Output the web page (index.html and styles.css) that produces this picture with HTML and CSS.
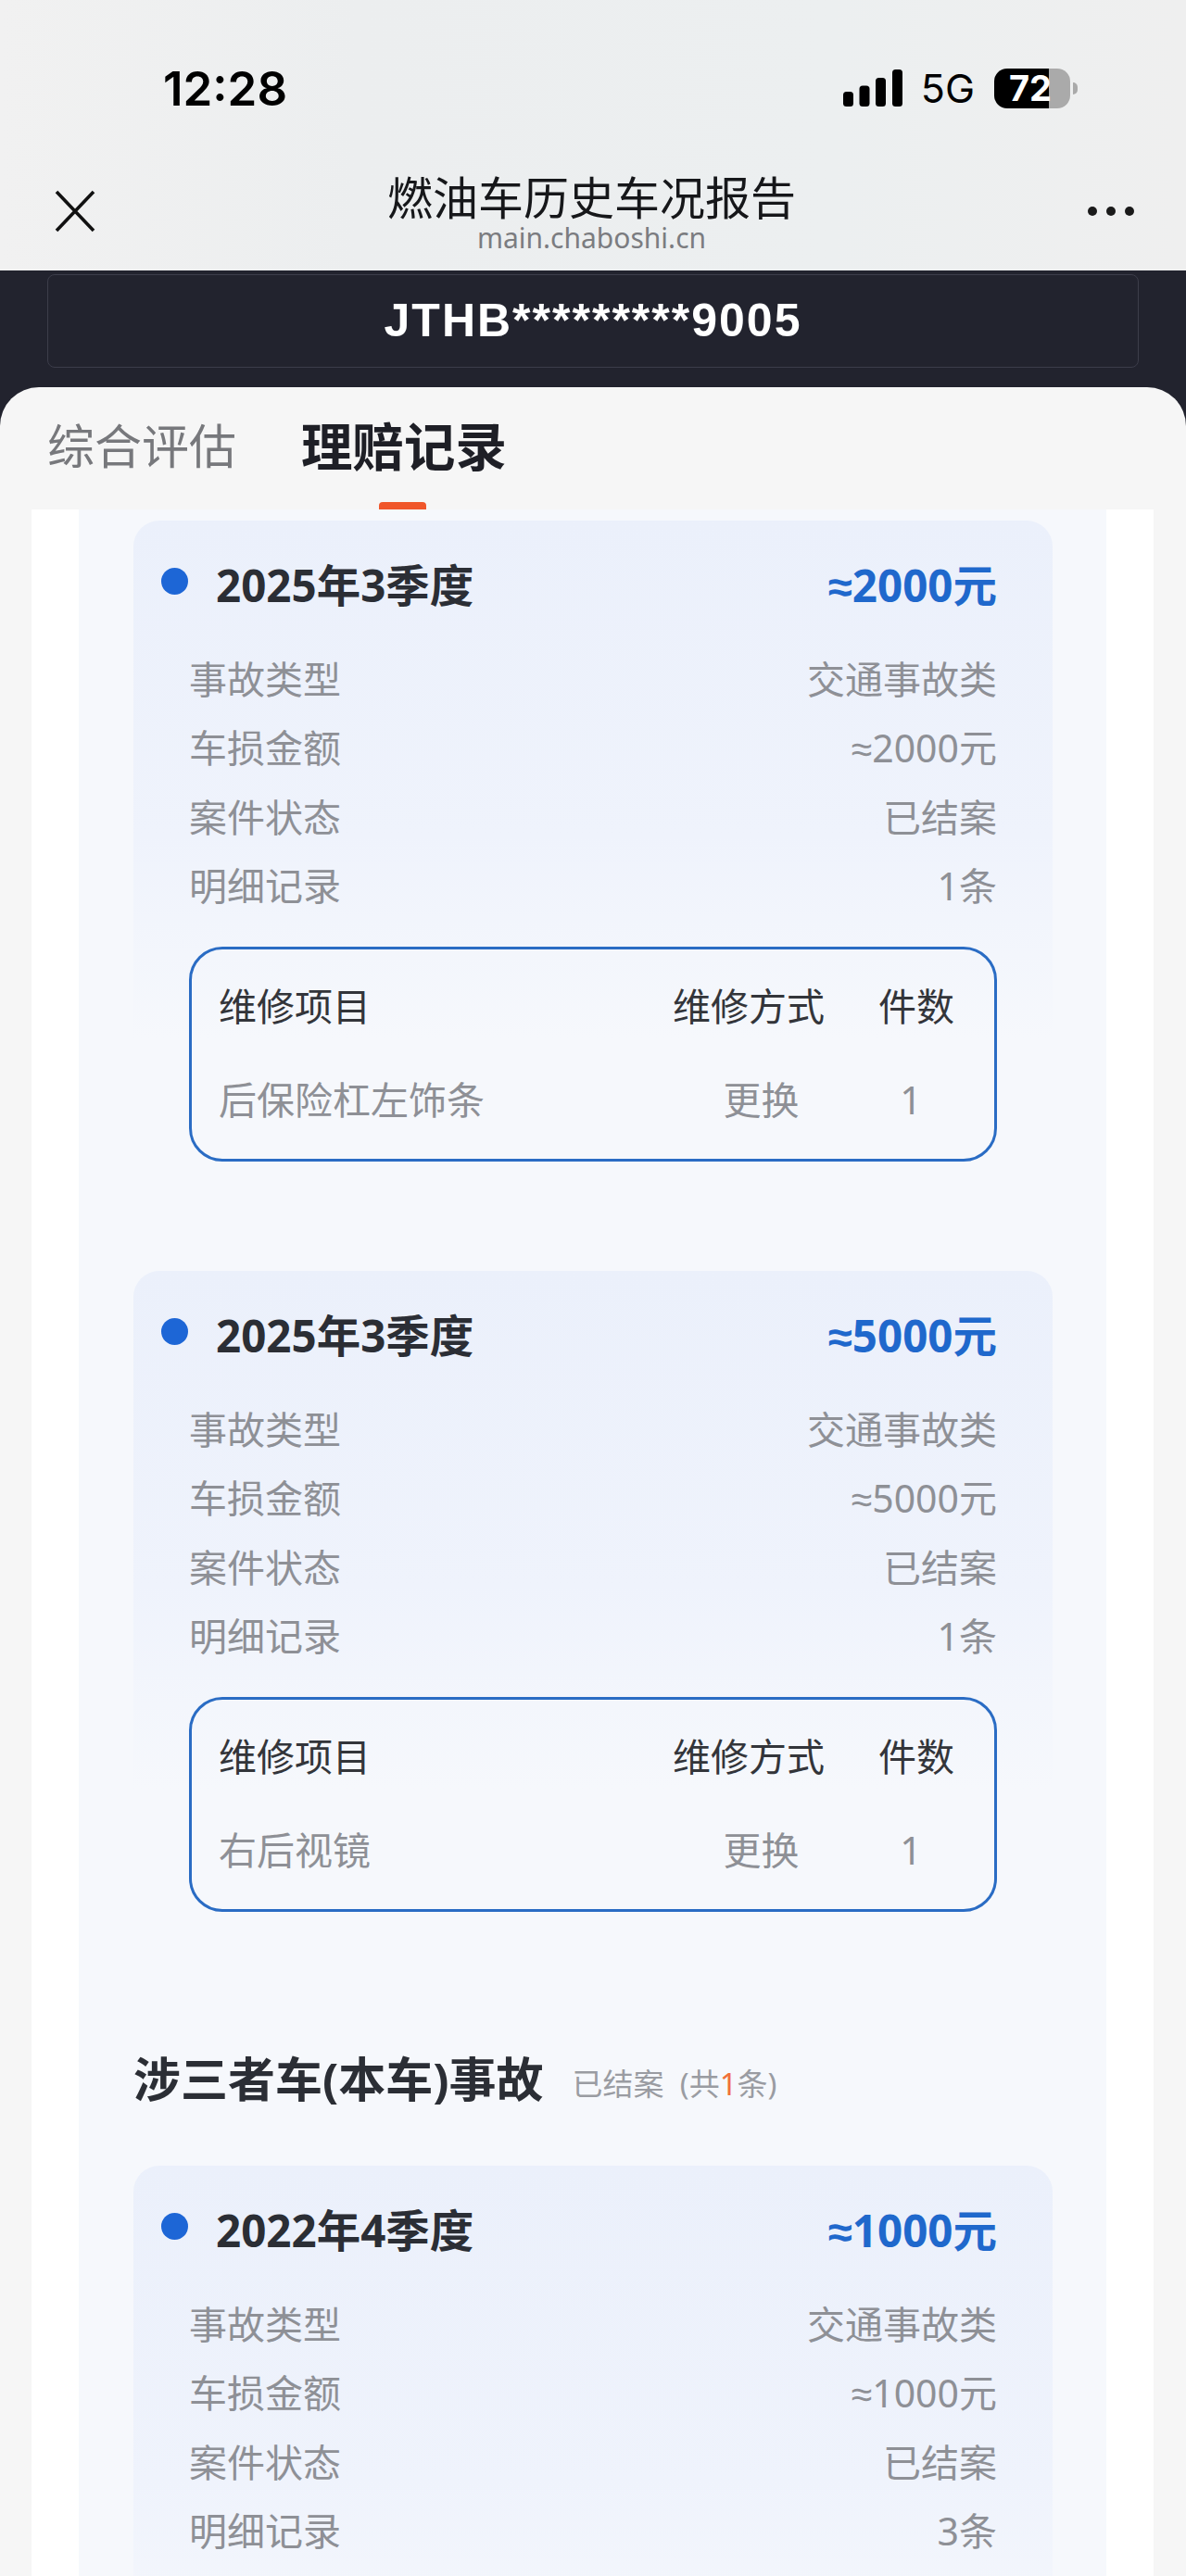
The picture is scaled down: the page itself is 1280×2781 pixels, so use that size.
FILE: index.html
```html
<!DOCTYPE html>
<html>
    <head>
        <title>燃油车历史车况报告</title>
        <link rel="stylesheet" href="styles.css">
    </head>
    <body>
        <div class="top">
            <div class="status">
                <span class="time">12:28</span>
                <div class="status-right">
                    <svg class="signal" width="64" height="40" viewBox="0 0 64 40">
                        <rect x="0" y="24" width="11" height="16" rx="3.5"/>
                        <rect x="17.5" y="17.5" width="11" height="22.5" rx="3.5"/>
                        <rect x="35" y="9" width="11" height="31" rx="3.5"/>
                        <rect x="53" y="0" width="11" height="40" rx="3.5"/>
                    </svg>
                    <span class="net">5G</span>
                    <div class="battery">
                        <div class="battery-body"><span class="battery-num">72</span></div>
                        <b class="battery-nub"></b>
                    </div>
                </div>
            </div>
            <div class="nav">
                <svg class="close" width="44" height="46" viewBox="0 0 44 46">
                    <path d="M2 2 L42 44 M42 2 L2 44" fill="none" stroke="#111" stroke-width="3.6"/>
                </svg>
                <div class="nav-title">
                    <div class="nav-name">燃油车历史车况报告</div>
                    <div class="nav-host">main.chaboshi.cn</div>
                </div>
                <div class="more"><b></b><b></b><b></b></div>
            </div>
        </div>

        <div class="vin-wrap">
            <div class="vin">JTHB*********9005</div>
        </div>

        <div class="sheet">
            <div class="tabs">
                <div class="tab">综合评估</div>
                <div class="tab tab-on">理赔记录<b class="tab-mark"></b></div>
            </div>
            <div class="strip">
                <div class="panel">

                    <div class="card">
                        <div class="card-head">
                            <b class="dot"></b>
                            <span class="card-date">2025年3季度</span>
                            <span class="card-amount"><i class="approx">≈</i>2000元</span>
                        </div>
                        <div class="row"><span>事故类型</span><span>交通事故类</span></div>
                        <div class="row"><span>车损金额</span><span><i class="approx">≈</i>2000元</span></div>
                        <div class="row"><span>案件状态</span><span>已结案</span></div>
                        <div class="row"><span>明细记录</span><span>1条</span></div>
                        <div class="repair">
                            <div class="repair-row repair-head"><span>维修项目</span><span>维修方式</span><span>件数</span></div>
                            <div class="repair-row repair-item"><span>后保险杠左饰条</span><span>更换</span><span>1</span></div>
                        </div>
                    </div>

                    <div class="card">
                        <div class="card-head">
                            <b class="dot"></b>
                            <span class="card-date">2025年3季度</span>
                            <span class="card-amount"><i class="approx">≈</i>5000元</span>
                        </div>
                        <div class="row"><span>事故类型</span><span>交通事故类</span></div>
                        <div class="row"><span>车损金额</span><span><i class="approx">≈</i>5000元</span></div>
                        <div class="row"><span>案件状态</span><span>已结案</span></div>
                        <div class="row"><span>明细记录</span><span>1条</span></div>
                        <div class="repair">
                            <div class="repair-row repair-head"><span>维修项目</span><span>维修方式</span><span>件数</span></div>
                            <div class="repair-row repair-item"><span>右后视镜</span><span>更换</span><span>1</span></div>
                        </div>
                    </div>

                    <div class="group">
                        <span class="group-name">涉三者车(本车)事故</span>
                        <span class="group-note">已结案&nbsp;&nbsp;(共<em>1</em>条)</span>
                    </div>

                    <div class="card">
                        <div class="card-head">
                            <b class="dot"></b>
                            <span class="card-date">2022年4季度</span>
                            <span class="card-amount"><i class="approx">≈</i>1000元</span>
                        </div>
                        <div class="row"><span>事故类型</span><span>交通事故类</span></div>
                        <div class="row"><span>车损金额</span><span><i class="approx">≈</i>1000元</span></div>
                        <div class="row"><span>案件状态</span><span>已结案</span></div>
                        <div class="row"><span>明细记录</span><span>3条</span></div>
                    </div>

                </div>
            </div>
        </div>
    </body>
</html>
```

FILE: styles.css
```css
html, body {
    margin: 0;
    height: 2781px;
    overflow: hidden;
}
body {
    font-family: "Noto Sans", "Noto Sans CJK SC", sans-serif;
    background: #f6f6f6;
}

/* status bar + webview title */
.top {
    height: 292px;
    box-sizing: border-box;
    background: linear-gradient(90deg, #f1f1f1 0%, #eceeef 30%, #eceff0 70%, #efefef 100%);
}
.status {
    display: flex;
    justify-content: space-between;
    align-items: center;
    height: 190px;
    box-sizing: border-box;
    padding: 0 117px 0 176px;
}
.time {
    font-family: "Inter", sans-serif;
    font-size: 51px;
    font-weight: 600;
    color: #000;
}
.status-right {
    display: flex;
    align-items: center;
}
.signal {
    display: block;
    fill: #000;
    margin-right: 20px;
}
.net {
    font-family: "Inter", sans-serif;
    font-size: 43px;
    color: #000;
    margin-right: 21px;
}
.battery {
    display: flex;
    align-items: center;
}
.battery-body {
    width: 82px;
    height: 43px;
    border-radius: 14px;
    background: linear-gradient(90deg, #000 0, #000 59px, #aaa 59px);
    text-align: center;
}
.battery-num {
    font-family: "Inter", sans-serif;
    font-size: 38px;
    font-weight: 700;
    line-height: 43px;
    color: #fff;
    display: block;
    padding-right: 4px;
}
.battery-nub {
    width: 5px;
    height: 13px;
    margin-left: 3px;
    background: #aaa;
    border-radius: 0 5px 5px 0;
}

.nav {
    display: flex;
    justify-content: space-between;
    align-items: flex-start;
    padding: 0 56px 0 59px;
}
.close {
    display: block;
    margin-top: 15px;
}
.nav-title {
    text-align: center;
}
.nav-name {
    font-family: "Noto Sans CJK SC", sans-serif;
    font-size: 49px;
    line-height: 52px;
    margin-top: -5px;
    color: #16171a;
}
.nav-host {
    font-size: 30px;
    line-height: 36px;
    margin-top: 2px;
    color: #7b7c80;
}
.more {
    display: flex;
    gap: 10px;
    margin-top: 33px;
}
.more b {
    width: 10px;
    height: 10px;
    border-radius: 5px;
    background: #1a1a1a;
}

/* dark band runs on behind the rounded corners of the sheet */
.vin-wrap {
    background: #22232e;
    height: 168px;
    box-sizing: border-box;
    padding: 4px 51px 0;
}
.vin {
    height: 101px;
    box-sizing: border-box;
    border: 1px solid #3c3d4a;
    border-radius: 8px;
    text-align: center;
    font-family: "Liberation Sans", sans-serif;
    font-weight: 700;
    font-size: 50px;
    letter-spacing: 2px;
    line-height: 99px;
    color: #fff;
}

.sheet {
    margin-top: -42px;
    background: #f6f6f6;
    border-radius: 42px 42px 0 0;
}
.tabs {
    display: flex;
    height: 132px;
    box-sizing: border-box;
    padding: 25px 0 0 51px;
    gap: 70px;
    font-family: "Noto Sans CJK SC", sans-serif;
}
.tab {
    font-size: 51px;
    line-height: 72px;
    color: #77787c;
}
.tab-on {
    display: flex;
    flex-direction: column;
    align-items: center;
    font-size: 55.5px;
    font-weight: 700;
    color: #1e1f26;
}
.tab-mark {
    width: 51px;
    height: 8px;
    margin: 27px 3px 0 0;
    background: #f0562a;
    border-radius: 4px 4px 0 0;
}

.strip {
    margin: 0 35px 0 34px;
    padding: 0 51px;
    background: #fff;
}
.panel {
    padding: 12px 58px 0 59px;
    background: #f6f8fc;
    height: 2231px;
    box-sizing: border-box;
    overflow: hidden;
}

.card {
    padding: 32px 60px 0;
    height: 810px;
    box-sizing: border-box;
    border-radius: 28px;
    background: linear-gradient(180deg, #ebf0fb 0, #eff3fc 340px, #f6f8fc 560px);
}
.card-head {
    display: flex;
    align-items: center;
    height: 70px;
    margin: 0 0 34px -30px;
}
.dot {
    width: 29px;
    height: 29px;
    border-radius: 50%;
    background: #1d66d6;
    margin: -3px 30px 0 0;
}
.card-date {
    flex: 1;
    font-size: 47.5px;
    font-weight: 700;
    color: #2b2e35;
}
.card-amount {
    font-size: 47.5px;
    font-weight: 700;
    color: #1f68cc;
}
.approx {
    font-family: "Liberation Sans", sans-serif;
    font-style: normal;
}
.row {
    display: flex;
    justify-content: space-between;
    height: 74.3px;
    line-height: 71px;
    font-size: 41px;
    color: #8e9096;
}

.repair {
    margin-top: 27px;
    height: 232px;
    box-sizing: border-box;
    padding: 31px 45px 0 29px;
    border: 3px solid #2a6cc4;
    border-radius: 36px;
}
.repair-row {
    display: grid;
    grid-template-columns: 1fr 164px 80px;
    column-gap: 58px;
    height: 60px;
    line-height: 60px;
    font-size: 41px;
    white-space: nowrap;
}
.repair-head {
    color: #33353a;
    margin-bottom: 41px;
}
.repair-item {
    color: #8e9096;
}
.repair-item span:nth-child(2) {
    text-align: center;
    padding-left: 27px;
}
.repair-item span:nth-child(3) {
    text-align: center;
    padding-right: 10px;
}

.group {
    display: flex;
    align-items: center;
    height: 70px;
    margin-top: 25px;
    margin-bottom: 61px;
}
.group-name {
    font-size: 51px;
    font-weight: 700;
    color: #2b2e35;
    margin-right: 31px;
}
.group-note {
    font-size: 33px;
    color: #9a9ca2;
    padding-top: 12px;
}
.group-note em {
    font-style: normal;
    color: #f0703a;
}
```
